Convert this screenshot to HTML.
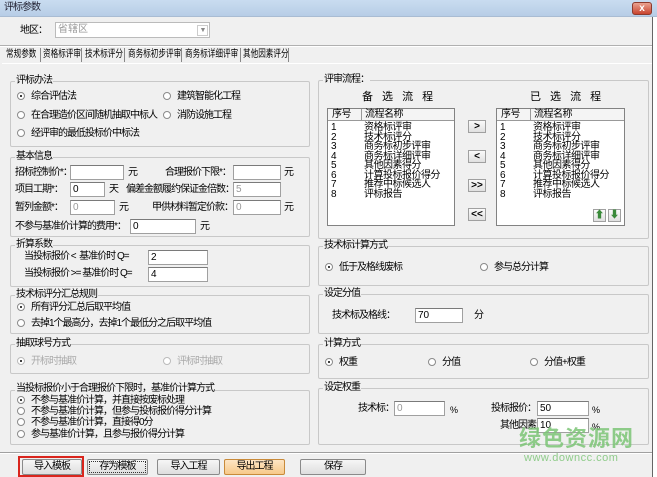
<!DOCTYPE html>
<html><head><meta charset="utf-8"><style>
*{margin:0;padding:0;box-sizing:border-box}
body{width:657px;height:477px;overflow:hidden;background:#f0f0f0;font-family:"Liberation Sans","Noto Sans CJK SC",sans-serif;font-size:10px;letter-spacing:-1px;color:#000;position:relative}
.a{position:absolute;white-space:nowrap;line-height:12px}
.title{position:absolute;left:0;top:0;width:657px;height:17px;background:linear-gradient(#c9dcf0,#b7cde6);border-bottom:1px solid #a9bcd3}
.close{position:absolute;left:632px;top:2px;width:20px;height:13px;background:linear-gradient(#e9a290,#c8442f);border:1px solid #8c3a2d;border-radius:3px;color:#fff;font-size:10px;line-height:11px;text-align:center;font-weight:bold;letter-spacing:0}
.g{position:absolute;border:1px solid #c8c8c8;border-radius:2px}
.g>.l{position:absolute;left:4px;top:-7px;background:#f0f0f0;padding:0 1px;line-height:12px}
.in{position:absolute;height:15px;background:#fff;border:1px solid #a0a0a0;border-top-color:#7a7a7a;font-size:10px;line-height:13px;padding-left:2px;letter-spacing:0}
.gr{color:#999}
.r{display:inline-block;width:8px;height:8px;border:1px solid #8a8a8a;border-radius:50%;background:#fff;margin-right:6px;vertical-align:-1px;position:relative}
.r.on:after{content:"";position:absolute;left:2px;top:2px;width:2px;height:2px;border-radius:50%;background:#000}
.r.dis{border-color:#bbb}
.btn{position:absolute;height:16px;border:1px solid #8a8a8a;border-radius:2px;background:linear-gradient(#f6f6f6,#dedede);text-align:center;line-height:14px}
.list{position:absolute;background:#fff;border:1px solid #828282;font-size:10px;letter-spacing:-0.5px}
.list .h{height:12px;border-bottom:1px solid #999;background:#f4f4f4;position:relative;line-height:11px}
.list .row{position:relative;height:9.5px;line-height:9.5px}
.sb{position:absolute;width:18px;height:13px;border:1px solid #a0a0a0;background:linear-gradient(#fafafa,#e0e0e0);text-align:center;font-size:10px;line-height:11px;font-weight:bold;letter-spacing:0}
.t{position:absolute;top:49px;line-height:12px;white-space:nowrap;font-size:10px;letter-spacing:0;transform:scaleX(0.76);transform-origin:0 0}
.sep{position:absolute;top:48px;width:1px;height:14px;background:#888}
</style></head><body>
<div class="title"><span class="a" style="left:4px;top:2px;color:#223">评标参数</span><div class="close">x</div></div>
<div style="position:absolute;left:652px;top:17px;width:5px;height:460px;background:#fff;border-left:1px solid #666"></div>

<span class="a" style="left:20px;top:25px">地区：</span>
<div class="in gr" style="left:55px;top:22px;width:155px;height:16px;border-color:#bbb">省辖区</div>
<div style="position:absolute;left:197px;top:25px;width:11px;height:11px;border:1px solid #ccc;font-size:7px;color:#888;text-align:center;line-height:9px">▼</div>
<div style="position:absolute;left:0;top:45px;width:652px;border-top:1px solid #b0b0b0;border-bottom:1px solid #fff"></div>

<span class="t" style="left:6px">常规参数</span><div class="sep" style="left:40px"></div>
<span class="t" style="left:43px">资格标评审</span><div class="sep" style="left:81px"></div>
<span class="t" style="left:85px">技术标评分</span><div class="sep" style="left:124px"></div>
<span class="t" style="left:128px">商务标初步评审</span><div class="sep" style="left:181px"></div>
<span class="t" style="left:185px">商务标详细评审</span><div class="sep" style="left:240px"></div>
<span class="t" style="left:243px">其他因素评分</span><div class="sep" style="left:288px"></div>
<div style="position:absolute;left:2px;top:63px;width:650px;border-top:1px solid #fff"></div>

<!-- left -->
<div class="g" style="left:10px;top:81px;width:300px;height:66px"><span class="l">评标办法</span></div>
<span class="a" style="left:17px;top:91px"><i class="r on"></i>综合评估法</span>
<span class="a" style="left:163px;top:91px"><i class="r"></i>建筑智能化工程</span>
<span class="a" style="left:17px;top:110px"><i class="r"></i>在合理造价区间随机抽取中标人</span>
<span class="a" style="left:163px;top:110px"><i class="r"></i>消防设施工程</span>
<span class="a" style="left:17px;top:128px"><i class="r"></i>经评审的最低投标价中标法</span>

<div class="g" style="left:10px;top:157px;width:300px;height:80px"><span class="l">基本信息</span></div>
<span class="a" style="left:15px;top:167px">招标控制价*：</span><div class="in" style="left:70px;top:165px;width:54px"></div><span class="a" style="left:128px;top:167px">元</span>
<span class="a" style="left:165px;top:167px">合理报价下限*：</span><div class="in" style="left:233px;top:165px;width:48px"></div><span class="a" style="left:284px;top:167px">元</span>
<span class="a" style="left:15px;top:184px">项目工期*：</span><div class="in" style="left:70px;top:182px;width:35px">0</div><span class="a" style="left:109px;top:184px">天</span>
<span class="a" style="left:126px;top:184px">偏差金额履约保证金倍数：</span><div class="in gr" style="left:233px;top:182px;width:48px">5</div>
<span class="a" style="left:15px;top:202px">暂列金额*：</span><div class="in gr" style="left:70px;top:200px;width:45px">0</div><span class="a" style="left:119px;top:202px">元</span>
<span class="a" style="left:152px;top:202px">甲供材料暂定价款：</span><div class="in gr" style="left:233px;top:200px;width:48px">0</div><span class="a" style="left:284px;top:202px">元</span>
<span class="a" style="left:15px;top:221px">不参与基准价计算的费用*：</span><div class="in" style="left:130px;top:219px;width:66px">0</div><span class="a" style="left:200px;top:221px">元</span>

<div class="g" style="left:10px;top:245px;width:300px;height:42px"><span class="l">折算系数</span></div>
<span class="a" style="left:24px;top:251px">当投标报价 &lt;&nbsp; 基准价时 Q=</span><div class="in" style="left:148px;top:250px;width:60px">2</div>
<span class="a" style="left:24px;top:268px">当投标报价 &gt;= 基准价时 Q=</span><div class="in" style="left:148px;top:267px;width:60px">4</div>

<div class="g" style="left:10px;top:295px;width:300px;height:39px"><span class="l">技术标评分汇总规则</span></div>
<span class="a" style="left:17px;top:302px"><i class="r on"></i>所有评分汇总后取平均值</span>
<span class="a" style="left:17px;top:318px"><i class="r"></i>去掉1个最高分，去掉1个最低分之后取平均值</span>

<div class="g" style="left:10px;top:344px;width:300px;height:30px"><span class="l">抽取球号方式</span></div>
<span class="a gr" style="left:17px;top:356px;color:#aaa"><i class="r on dis"></i>开标时抽取</span>
<span class="a gr" style="left:163px;top:356px;color:#aaa"><i class="r dis"></i>评标时抽取</span>

<div class="g" style="left:10px;top:390px;width:300px;height:55px"><span class="l" style="top:-8px">当投标报价小于合理报价下限时，基准价计算方式</span></div>
<span class="a" style="left:17px;top:395px"><i class="r on"></i>不参与基准价计算，并直接按废标处理</span>
<span class="a" style="left:17px;top:406px"><i class="r"></i>不参与基准价计算，但参与投标报价得分计算</span>
<span class="a" style="left:17px;top:417px"><i class="r"></i>不参与基准价计算，直接得0分</span>
<span class="a" style="left:17px;top:429px"><i class="r"></i>参与基准价计算，且参与报价得分计算</span>

<!-- right -->
<div class="g" style="left:318px;top:80px;width:331px;height:159px"><span class="l">评审流程：</span></div>
<span class="a" style="left:362px;top:91px;font-size:11px;letter-spacing:3px">备 选 流 程</span>
<span class="a" style="left:530px;top:91px;font-size:11px;letter-spacing:3px">已 选 流 程</span>
<div class="list" style="left:327px;top:108px;width:128px;height:118px">
<div class="h"><span class="a" style="left:4px;top:0;line-height:11px">序号</span><span class="a" style="left:33px;top:0;line-height:11px;border-left:1px solid #999;padding-left:3px">流程名称</span></div>
<div style="padding-top:2px">
<div class="row"><span class="a" style="left:3px;line-height:9.5px">1</span><span class="a" style="left:36px;line-height:9.5px">资格标评审</span></div>
<div class="row"><span class="a" style="left:3px;line-height:9.5px">2</span><span class="a" style="left:36px;line-height:9.5px">技术标评分</span></div>
<div class="row"><span class="a" style="left:3px;line-height:9.5px">3</span><span class="a" style="left:36px;line-height:9.5px">商务标初步评审</span></div>
<div class="row"><span class="a" style="left:3px;line-height:9.5px">4</span><span class="a" style="left:36px;line-height:9.5px">商务标详细评审</span></div>
<div class="row"><span class="a" style="left:3px;line-height:9.5px">5</span><span class="a" style="left:36px;line-height:9.5px">其他因素得分</span></div>
<div class="row"><span class="a" style="left:3px;line-height:9.5px">6</span><span class="a" style="left:36px;line-height:9.5px">计算投标报价得分</span></div>
<div class="row"><span class="a" style="left:3px;line-height:9.5px">7</span><span class="a" style="left:36px;line-height:9.5px">推荐中标候选人</span></div>
<div class="row"><span class="a" style="left:3px;line-height:9.5px">8</span><span class="a" style="left:36px;line-height:9.5px">评标报告</span></div>
</div></div>
<div class="list" style="left:496px;top:108px;width:129px;height:118px">
<div class="h"><span class="a" style="left:4px;top:0;line-height:11px">序号</span><span class="a" style="left:33px;top:0;line-height:11px;border-left:1px solid #999;padding-left:3px">流程名称</span></div>
<div style="padding-top:2px">
<div class="row"><span class="a" style="left:3px;line-height:9.5px">1</span><span class="a" style="left:36px;line-height:9.5px">资格标评审</span></div>
<div class="row"><span class="a" style="left:3px;line-height:9.5px">2</span><span class="a" style="left:36px;line-height:9.5px">技术标评分</span></div>
<div class="row"><span class="a" style="left:3px;line-height:9.5px">3</span><span class="a" style="left:36px;line-height:9.5px">商务标初步评审</span></div>
<div class="row"><span class="a" style="left:3px;line-height:9.5px">4</span><span class="a" style="left:36px;line-height:9.5px">商务标详细评审</span></div>
<div class="row"><span class="a" style="left:3px;line-height:9.5px">5</span><span class="a" style="left:36px;line-height:9.5px">其他因素得分</span></div>
<div class="row"><span class="a" style="left:3px;line-height:9.5px">6</span><span class="a" style="left:36px;line-height:9.5px">计算投标报价得分</span></div>
<div class="row"><span class="a" style="left:3px;line-height:9.5px">7</span><span class="a" style="left:36px;line-height:9.5px">推荐中标候选人</span></div>
<div class="row"><span class="a" style="left:3px;line-height:9.5px">8</span><span class="a" style="left:36px;line-height:9.5px">评标报告</span></div>
</div>
<div class="sb" style="left:96px;top:100px;width:13px;height:13px;color:#3a8a3a">⬆</div>
<div class="sb" style="left:111px;top:100px;width:13px;height:13px;color:#3a8a3a">⬇</div>
</div>
<div class="sb" style="left:468px;top:120px">&gt;</div>
<div class="sb" style="left:468px;top:150px">&lt;</div>
<div class="sb" style="left:468px;top:179px">&gt;&gt;</div>
<div class="sb" style="left:468px;top:208px">&lt;&lt;</div>

<div class="g" style="left:318px;top:246px;width:331px;height:40px"><span class="l">技术标计算方式</span></div>
<span class="a" style="left:325px;top:262px"><i class="r on"></i>低于及格线废标</span>
<span class="a" style="left:480px;top:262px"><i class="r"></i>参与总分计算</span>

<div class="g" style="left:318px;top:294px;width:331px;height:40px"><span class="l">设定分值</span></div>
<span class="a" style="left:332px;top:310px">技术标及格线：</span><div class="in" style="left:415px;top:308px;width:48px">70</div><span class="a" style="left:474px;top:310px">分</span>

<div class="g" style="left:318px;top:344px;width:331px;height:35px"><span class="l">计算方式</span></div>
<span class="a" style="left:325px;top:357px"><i class="r on"></i>权重</span>
<span class="a" style="left:428px;top:357px"><i class="r"></i>分值</span>
<span class="a" style="left:530px;top:357px"><i class="r"></i>分值+权重</span>

<div class="g" style="left:318px;top:388px;width:331px;height:57px"><span class="l">设定权重</span></div>
<span class="a" style="left:358px;top:403px">技术标：</span><div class="in gr" style="left:394px;top:401px;width:51px">0</div><span class="a" style="left:450px;top:404px;font-size:9px">%</span>
<span class="a" style="left:491px;top:403px">投标报价：</span><div class="in" style="left:537px;top:401px;width:52px">50</div><span class="a" style="left:592px;top:404px;font-size:9px">%</span>
<span class="a" style="left:500px;top:420px">其他因素</span><div class="in" style="left:537px;top:418px;width:52px">10</div><span class="a" style="left:592px;top:421px;font-size:9px">%</span>

<div style="position:absolute;left:0;top:452px;width:652px;border-top:1px solid #a0a0a0;border-bottom:1px solid #fff"></div>
<div style="position:absolute;left:18px;top:456px;width:66px;height:21px;border:2px solid #d9251d"></div>
<div class="btn" style="left:22px;top:459px;width:60px">导入模板</div>
<div class="btn" style="left:87px;top:459px;width:61px;outline:1px dotted #333;outline-offset:-3px">存为模板</div>
<div class="btn" style="left:157px;top:459px;width:63px">导入工程</div>
<div class="btn" style="left:224px;top:459px;width:61px;background:linear-gradient(#fde5c4,#f7c98a);border-color:#c88a3a">导出工程</div>
<div class="btn" style="left:300px;top:459px;width:66px">保存</div>

<span class="a" style="left:519px;top:426px;font-size:22px;line-height:26px;color:#7cc576;font-weight:bold;opacity:.85;letter-spacing:1px">绿色资源网</span>
<span class="a" style="left:524px;top:452px;font-size:11px;color:#8fcc8a;letter-spacing:.5px">www.downcc.com</span>
</body></html>
